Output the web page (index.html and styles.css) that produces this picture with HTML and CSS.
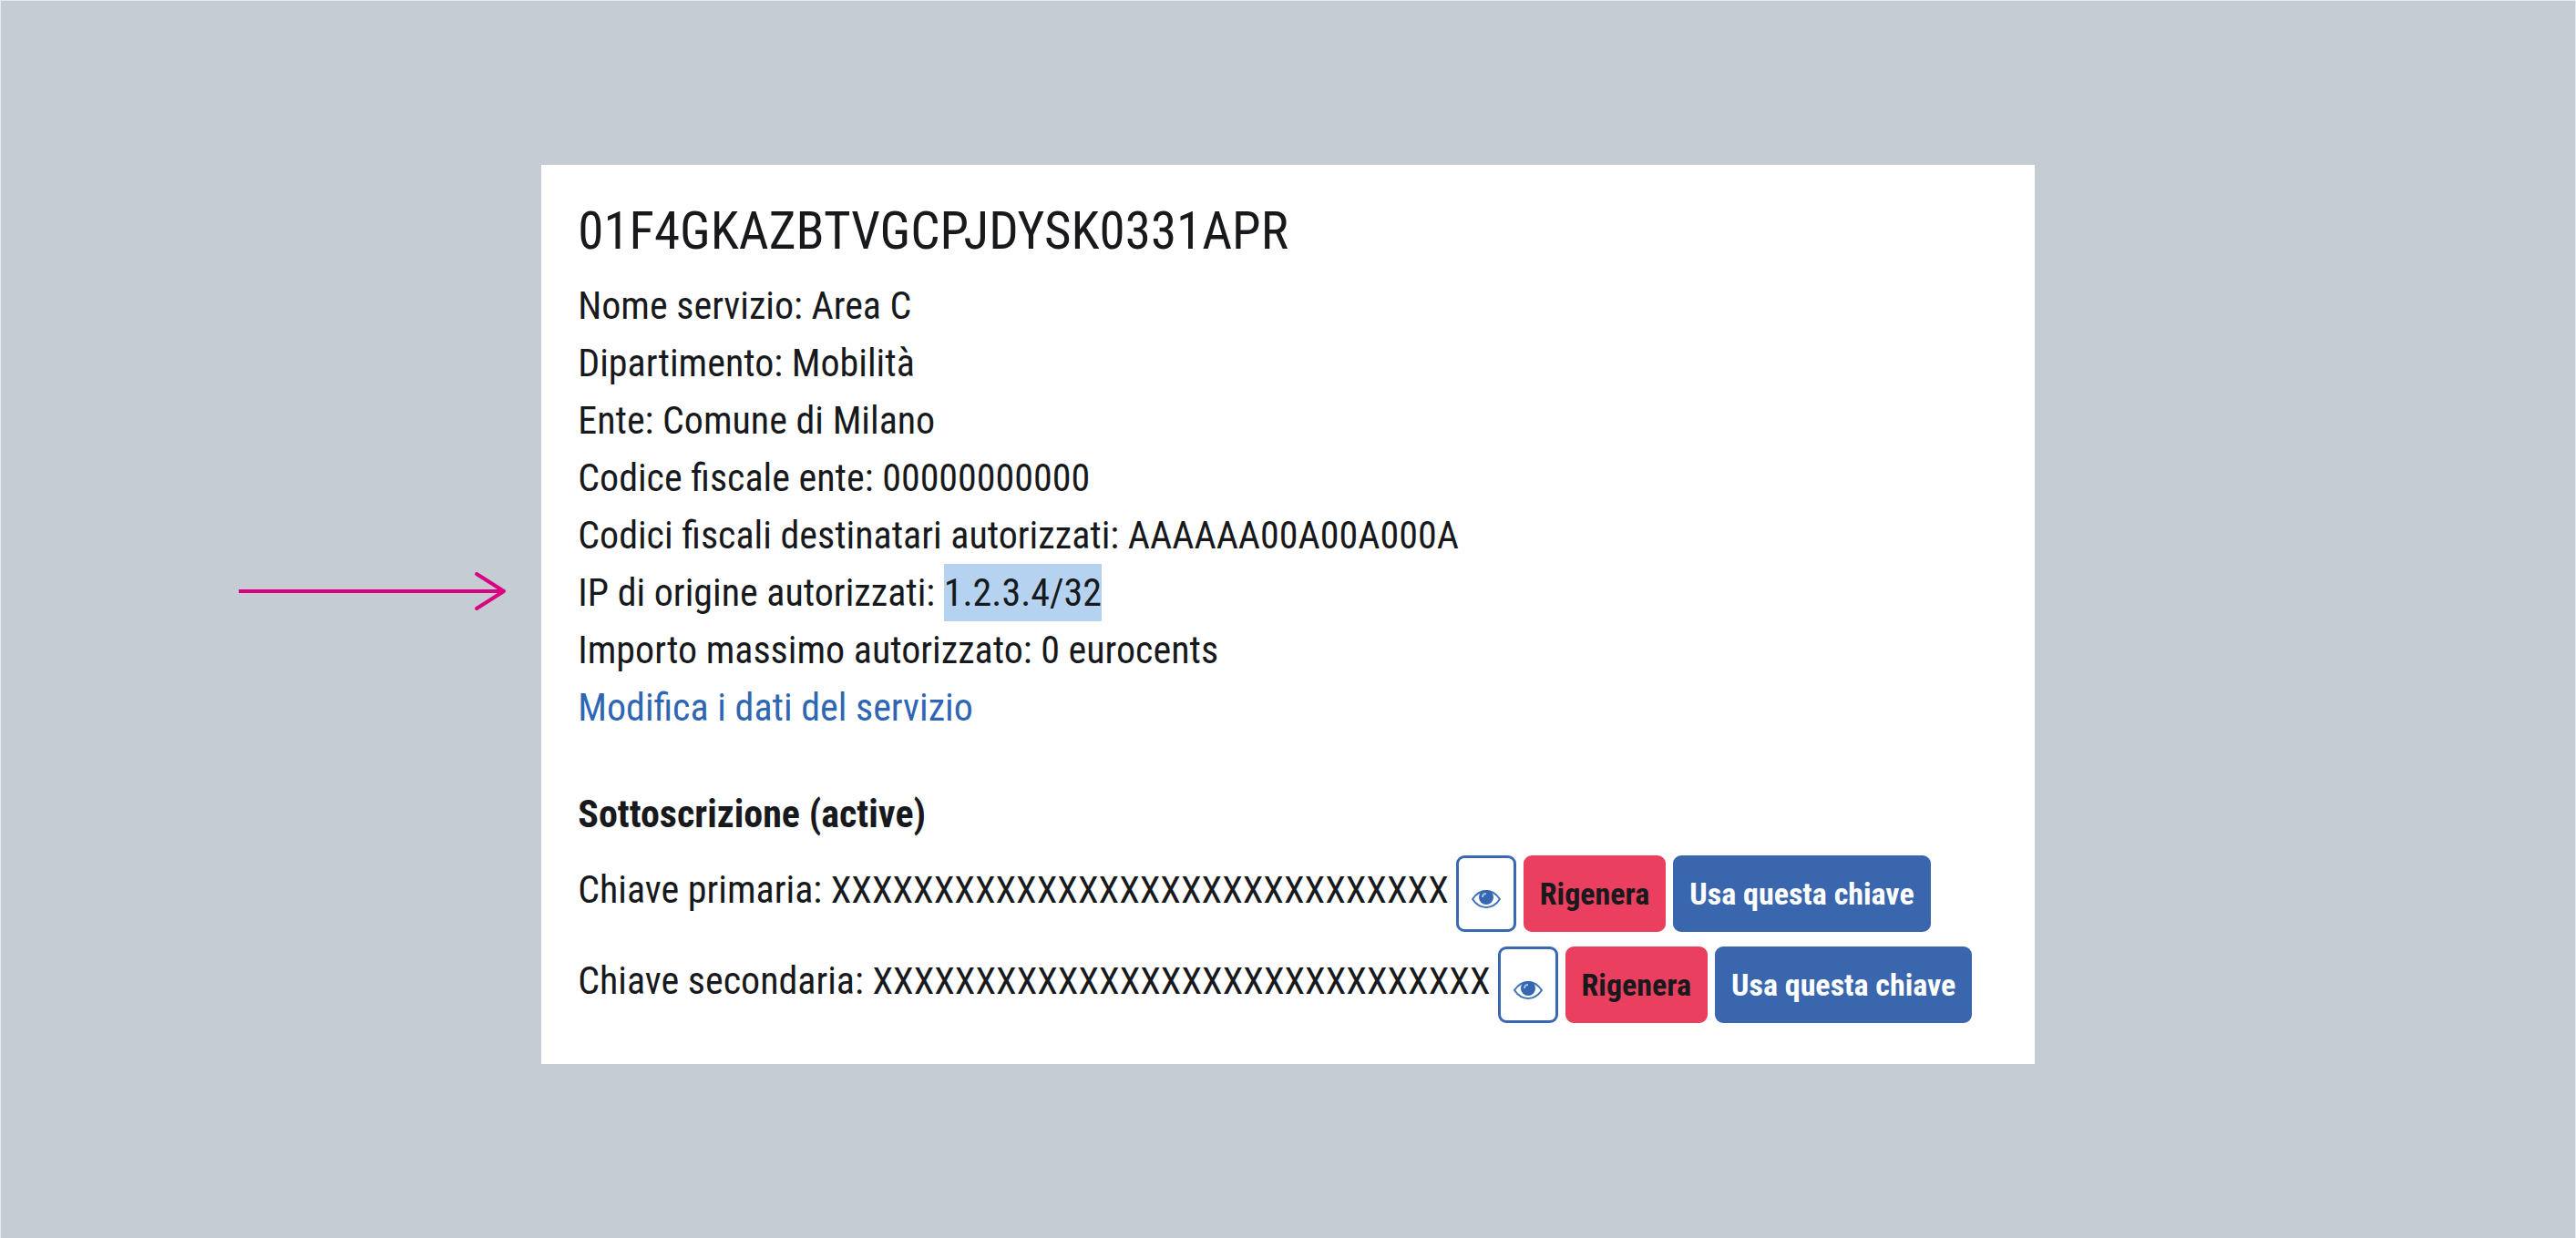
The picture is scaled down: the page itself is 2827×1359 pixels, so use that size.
FILE: index.html
```html
<!DOCTYPE html>
<html lang="it">
<head>
  <meta charset="utf-8">
  <meta name="viewport" content="width=device-width, initial-scale=1">
  <title>Area C</title>
  <link rel="stylesheet" href="styles.css">
</head>
<body>
  <main class="stage">
    <article class="card">
      <h1 class="card-title">01F4GKAZBTVGCPJDYSK0331APR</h1>
      <ul class="details">
        <li>Nome servizio: Area C</li>
        <li>Dipartimento: Mobilità</li>
        <li>Ente: Comune di Milano</li>
        <li>Codice fiscale ente: 00000000000</li>
        <li>Codici fiscali destinatari autorizzati: AAAAAA00A00A000A</li>
        <li class="pointed">
          <svg class="arrow" viewBox="0 0 294 44" aria-hidden="true">
            <path d="M0 22H291"/>
            <path class="arrow-head" d="M261 3L291 22L261 41"/>
          </svg>
          IP di origine autorizzati: <mark class="highlight">1.2.3.4/32</mark>
        </li>
        <li>Importo massimo autorizzato: 0 eurocents</li>
        <li><a class="edit-link" href="#modifica">Modifica i dati del servizio</a></li>
      </ul>

      <h2 class="section-title">Sottoscrizione (active)</h2>
      <div class="keys">
        <div class="key-row">
          <p class="key-text">Chiave primaria: <span class="key">XXXXXXXXXXXXXXXXXXXXXXXXXXXXXX</span></p>
          <button class="btn btn-eye" type="button" aria-label="Mostra">
            <svg class="eye" viewBox="0 0 32 22" aria-hidden="true">
              <path class="eye-lid" d="M1 11C5 5 10 2 16 2S27 5 31 11C27 17 22 20 16 20S5 17 1 11Z"/>
              <circle class="eye-iris" cx="16" cy="9" r="8"/>
              <path class="eye-glint" d="M12 9Q12 5 16 5"/>
            </svg>
          </button>
          <button class="btn btn-danger" type="button">Rigenera</button>
          <button class="btn btn-primary" type="button">Usa questa chiave</button>
        </div>
        <div class="key-row">
          <p class="key-text">Chiave secondaria: <span class="key">XXXXXXXXXXXXXXXXXXXXXXXXXXXXXX</span></p>
          <button class="btn btn-eye" type="button" aria-label="Mostra">
            <svg class="eye" viewBox="0 0 32 22" aria-hidden="true">
              <path class="eye-lid" d="M1 11C5 5 10 2 16 2S27 5 31 11C27 17 22 20 16 20S5 17 1 11Z"/>
              <circle class="eye-iris" cx="16" cy="9" r="8"/>
              <path class="eye-glint" d="M12 9Q12 5 16 5"/>
            </svg>
          </button>
          <button class="btn btn-danger" type="button">Rigenera</button>
          <button class="btn btn-primary" type="button">Usa questa chiave</button>
        </div>
      </div>
    </article>
  </main>
</body>
</html>
```
FILE: styles.css
```css
* {
  box-sizing: border-box;
}

body {
  margin: 0;
  color: #17191c;
  font: 42px/63px "Roboto Condensed", Roboto, sans-serif;
}

h1,
h2,
p,
ul {
  margin: 0;
  padding: 0;
}

.stage {
  display: flex;
  justify-content: center;
  align-items: flex-start;
  min-height: 100vh;
  padding: 180px 0;
  background: #c5ccd3;
  border: 1px solid #e4ecef;
  border-bottom: 0;
}

.card {
  width: 58%;
  padding: 39px 40px 45px;
  background: #fff;
}

.card-title {
  margin-bottom: 16px;
  font-size: 57px;
  font-weight: 400;
  line-height: 68px;
}

.details {
  list-style: none;
}

.pointed {
  position: relative;
}

/* Callout in the page margin, level with the row it points at */
.arrow {
  position: absolute;
  right: 100%;
  top: 8px;
  width: 294px;
  height: 44px;
  margin-right: 78px;
  fill: none;
  stroke: #db0080;
  stroke-width: 4;
}

.arrow-head {
  stroke-linecap: round;
  stroke-linejoin: round;
}

.highlight {
  display: inline-block;
  background: #b5d3f0;
  color: inherit;
}

.edit-link {
  color: #2f66b3;
  text-decoration: none;
}

.section-title {
  margin-top: 54px;
  font-size: 42px;
  font-weight: 700;
  line-height: 63px;
}

.keys {
  display: flex;
  flex-direction: column;
  gap: 16px;
  margin-top: 14px;
}

.key-row {
  display: flex;
  align-items: flex-start;
  gap: 8px;
}

.key-text {
  line-height: 76px;
  white-space: nowrap;
}

.key {
  font-size: 41px;
}

.btn {
  display: flex;
  justify-content: center;
  align-items: center;
  height: 84px;
  padding: 0 15px;
  border: 3px solid;
  border-radius: 9px;
  font-family: inherit;
  font-size: 34px;
  font-weight: 700;
  line-height: 42px;
  white-space: nowrap;
}

.btn-eye {
  padding: 12px 14px 0;
  border-color: #3b69b1;
  background: #fff;
}

.btn-danger {
  border-color: #ea3f5e;
  background: #ea3f5e;
  color: #17191c;
}

.btn-primary {
  border-color: #3a66ae;
  background: #3a66ae;
  color: #fff;
}

.eye {
  width: 32px;
  height: 22px;
}

.eye-lid {
  fill: #fff;
  stroke: #3b73bd;
  stroke-width: 2;
}

.eye-iris {
  fill: #3666b2;
}

.eye-glint {
  fill: none;
  stroke: #9cc3e8;
  stroke-width: 2;
}
```
